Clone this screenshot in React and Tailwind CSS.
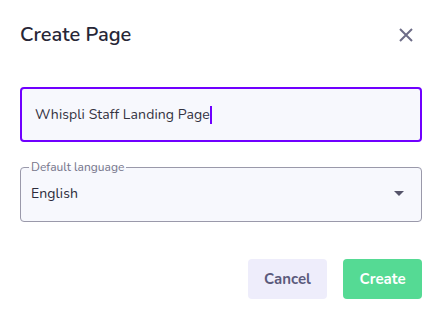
import React from 'react';

export default function App() {
  return (
    <div className="w-[442px] h-[319px] bg-white px-5 font-['Nunito','Lato',sans-serif] text-[#2b2b3b]">
      {/* Header */}
      <div className="flex items-center justify-between pt-[21px]">
        <h1 className="text-[20px] leading-[28px] font-semibold text-[#272636]">Create Page</h1>
        <button className="mr-[9px] text-[#6e6d88]">
          <svg width="14" height="14" viewBox="0 0 14 14" fill="none" stroke="currentColor" strokeWidth="2">
            <path d="M1 1 13 13M13 1 1 13" />
          </svg>
        </button>
      </div>

      {/* Page name input */}
      <div className="mt-[38px] h-[55px] rounded-[4px] border-2 border-[#7000ff] bg-[#f7f8fd] flex items-center pl-[13px]">
        <span className="text-[14px] tracking-[0.1px] text-[#33323f]">Whispli Staff Landing Page</span>
        <span className="w-[2px] h-[18px] bg-[#7000ff]"></span>
      </div>

      {/* Default language select */}
      <fieldset className="mt-[18px] h-[62px] rounded-[4px] border border-[#9a99aa] bg-[#f7f8fd] px-[10px] flex items-center justify-between">
        <legend className="text-[12px] leading-[14px] text-[#76758a] px-[2px] -ml-[2px]">Default language</legend>
        <span className="text-[14px] tracking-[0.1px] text-[#2b2b3b] -mt-[9px]">English</span>
        <svg className="-mt-[9px] mr-[7px]" width="10" height="5" viewBox="0 0 10 5" fill="#55546a">
          <path d="M0 0h10L5 5z" />
        </svg>
      </fieldset>

      {/* Actions */}
      <div className="mt-[37px] flex justify-end gap-4">
        <button className="w-[79px] h-[40px] rounded-[4px] bg-[#eeedfb] text-[#5b5a7c] text-[15px] font-bold">Cancel</button>
        <button className="w-[79px] h-[40px] rounded-[4px] bg-[#55da94] text-white text-[15px] font-bold">Create</button>
      </div>
    </div>
  );
}
